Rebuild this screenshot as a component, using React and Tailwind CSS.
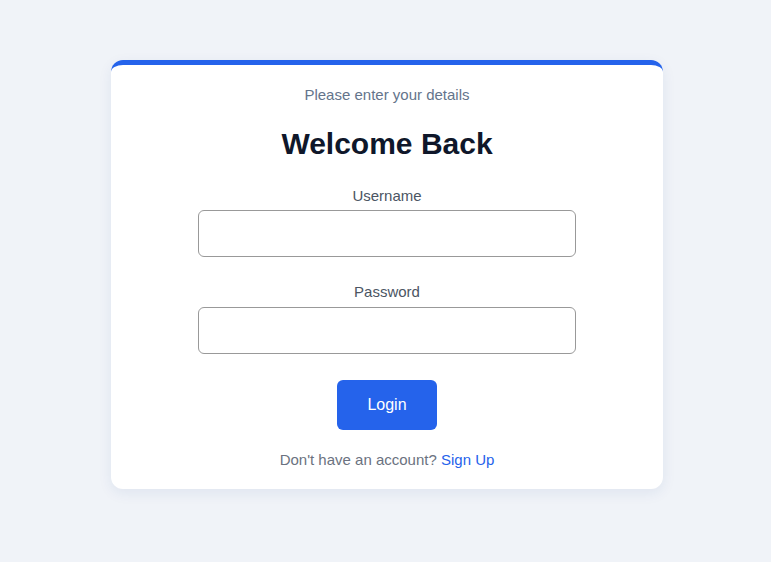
export default function App() {
  return (
    <div
      className="flex min-h-[562px] w-full justify-center bg-[#f0f3f8] pl-[3px] pt-[60px]"
      style={{ fontFamily: '"Liberation Sans", Arial, sans-serif' }}
    >
      <div className="flex h-[429px] w-[552px] flex-col items-center rounded-[12px] border-t-[5px] border-[#2563eb] bg-white pt-[21px] shadow-[0_4px_14px_rgba(30,58,138,0.08)]">
        <p className="text-[15px] leading-[17px] text-[#64748b]">Please enter your details</p>
        <h2 className="mt-[23px] text-[30px] font-bold leading-[36px] text-[#0f172a]">Welcome Back</h2>
        <form className="flex w-[378px] flex-col items-center" onSubmit={(e) => e.preventDefault()}>
          <label htmlFor="username" className="mt-[25px] text-[15px] leading-[17px] text-[#4b5563]">
            Username
          </label>
          <input
            id="username"
            type="text"
            className="mt-[6px] h-[47px] w-full rounded-[6px] border border-[#999999] bg-white px-3 outline-none"
          />
          <label htmlFor="password" className="mt-[26px] text-[15px] leading-[17px] text-[#4b5563]">
            Password
          </label>
          <input
            id="password"
            type="password"
            className="mt-[7px] h-[47px] w-full rounded-[6px] border border-[#999999] bg-white px-3 outline-none"
          />
          <button
            type="submit"
            className="mt-[26px] h-[50px] w-[100px] cursor-pointer rounded-[6px] bg-[#2563eb] text-[16px] text-white"
          >
            Login
          </button>
        </form>
        <p className="mt-[21px] text-[15px] leading-[17px] text-[#6b7280]">
          Don't have an account?{' '}
          <a href="#" className="text-[#2563eb]">
            Sign Up
          </a>
        </p>
      </div>
    </div>
  );
}
